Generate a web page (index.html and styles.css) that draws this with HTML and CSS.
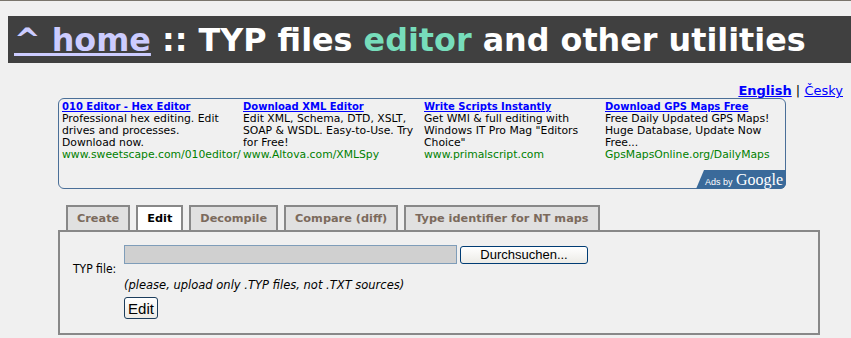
FILE: index.html
```html
<!DOCTYPE html>
<html lang="en">
<head>
    <meta charset="UTF-8">
    <title>TYP files editor and other utilities</title>
    <link rel="stylesheet" href="styles.css">
</head>
<body>
    <!-- Page title -->
    <h1 class="title">
        <a href="#" class="home-link">^ home</a> :: TYP files <span class="accent">editor</span> and other utilities
    </h1>

    <div class="lang">
        <a href="#" class="lang-current">English</a> | <a href="#">Česky</a>
    </div>

    <!-- Ad block -->
    <div class="ads">
        <div class="ad">
            <a href="#" class="ad-title">010 Editor - Hex Editor</a>
            <div>Professional hex editing. Edit drives and processes. Download now.</div>
            <div class="ad-url">www.sweetscape.com/010editor/</div>
        </div>
        <div class="ad">
            <a href="#" class="ad-title">Download XML Editor</a>
            <div>Edit XML, Schema, DTD, XSLT, SOAP &amp; WSDL. Easy-to-Use. Try for Free!</div>
            <div class="ad-url">www.Altova.com/XMLSpy</div>
        </div>
        <div class="ad">
            <a href="#" class="ad-title">Write Scripts Instantly</a>
            <div>Get WMI &amp; full editing with Windows IT Pro Mag "Editors Choice"</div>
            <div class="ad-url">www.primalscript.com</div>
        </div>
        <div class="ad">
            <a href="#" class="ad-title">Download GPS Maps Free</a>
            <div>Free Daily Updated GPS Maps! Huge Database, Update Now Free...</div>
            <div class="ad-url">GpsMapsOnline.org/DailyMaps</div>
        </div>
        <div class="ads-badge"><span class="ads-by">Ads by</span> <span class="ads-google">Google</span></div>
    </div>

    <!-- Tool tabs -->
    <div class="tabs">
        <a href="#" class="tab">Create</a>
        <a href="#" class="tab active">Edit</a>
        <a href="#" class="tab">Decompile</a>
        <a href="#" class="tab">Compare (diff)</a>
        <a href="#" class="tab">Type identifier for NT maps</a>
    </div>

    <div class="panel">
        <form class="upload">
            <label class="upload-label" for="typfile">TYP file:</label>
            <div class="upload-fields">
                <div class="file-row">
                    <span class="file-box" id="typfile"></span>
                    <button type="button" class="browse-btn">Durchsuchen...</button>
                </div>
                <div class="note">(please, upload only .TYP files, not .TXT sources)</div>
                <button type="submit" class="edit-btn">Edit</button>
            </div>
        </form>
    </div>

    <p class="footnote">Avoid placing the files to your map set before you check them in the map viewer.</p>
</body>
</html>
```

FILE: styles.css
```css
html {
    border-top: 1px solid #7a756c;
    background: #f0f0f0;
}

body {
    margin: 0;
    padding: 0 8px;
    font-family: 'DejaVu Sans', Verdana, sans-serif;
    color: #000;
    overflow: hidden;
}

a {
    color: #0000ff;
}

.title {
    margin: 15px -8px 0 0;
    height: 47px;
    line-height: 47px;
    padding-left: 6px;
    background: #404040;
    color: #ffffff;
    font-size: 31.8px;
    font-weight: bold;
    white-space: nowrap;
}

.home-link {
    color: #ccccff;
}

.accent {
    color: #77ddbb;
}

.lang {
    margin-top: 21px;
    text-align: right;
    font-size: 13px;
    line-height: 14px;
}

.lang-current {
    font-weight: bold;
}

.ads {
    position: relative;
    margin-left: 50px;
    width: 723px;
    height: 87px;
    padding: 2px 0 0 3px;
    border: 1px solid #4a6f98;
    border-radius: 6px;
    display: grid;
    grid-template-columns: 181px 181px 181px 180px;
    align-items: start;
    font-size: 10.8px;
    line-height: 12px;
}

.ad {
    padding-right: 9px;
}

.ad-title {
    font-size: 10px;
    font-weight: bold;
}

.ad-url {
    color: #008000;
    white-space: nowrap;
}

.ads-badge {
    position: absolute;
    right: -1px;
    bottom: -1px;
    width: 90px;
    height: 19px;
    background: #3a6a9a;
    color: #fff;
    border-radius: 8px 0 6px 0;
    clip-path: polygon(8px 0, 100% 0, 100% 100%, 0 100%);
    text-align: right;
    padding-right: 3px;
    box-sizing: border-box;
    white-space: nowrap;
}

.ads-by {
    font-family: 'Liberation Sans', Arial, sans-serif;
    font-size: 9px;
}

.ads-google {
    font-family: 'Liberation Serif', 'Times New Roman', serif;
    font-size: 16px;
    line-height: 19px;
}

.tabs {
    display: flex;
    gap: 6px;
    margin: 16px 0 0 58px;
}

.tab {
    display: block;
    height: 23px;
    line-height: 24px;
    padding: 0 9px;
    border: 2px solid #888;
    border-bottom: none;
    background: #e0e0e0;
    color: #7b6a5c;
    font-size: 11.3px;
    font-weight: bold;
    text-decoration: none;
}

.tab.active {
    background: #ffffff;
    color: #000;
}

.panel {
    margin-left: 50px;
    width: 758px;
    height: 101px;
    border: 2px solid #888;
}

.upload {
    display: flex;
    padding: 13px 0 0 13px;
}

.upload-label {
    width: 51px;
    padding-top: 17px;
    font-family: 'DejaVu Sans Condensed', Tahoma, sans-serif;
    font-size: 12px;
}

.file-row {
    display: flex;
    gap: 3px;
    align-items: center;
}

.file-box {
    display: block;
    width: 331px;
    height: 17px;
    border: 1px solid #7f9db9;
    background: #d0d0d0;
}

.browse-btn {
    width: 128px;
    height: 18px;
    padding: 0;
    border: 1px solid #003c74;
    border-radius: 3px;
    background: linear-gradient(#ffffff, #ecebe6);
    font-family: 'Liberation Sans', Arial, sans-serif;
    font-size: 13px;
}

.note {
    margin-top: 14px;
    font-size: 11.5px;
    font-style: italic;
    line-height: 15px;
}

.edit-btn {
    display: block;
    margin-top: 4px;
    width: 34px;
    height: 22px;
    padding: 0;
    border: 1px solid #1c3d5c;
    border-radius: 3px;
    background: linear-gradient(#ffffff, #ecebe6);
    font-family: 'Liberation Sans', Arial, sans-serif;
    font-size: 15px;
}

.footnote {
    margin: 2px 0 0 52px;
    font-size: 12px;
    line-height: 16px;
}
```
